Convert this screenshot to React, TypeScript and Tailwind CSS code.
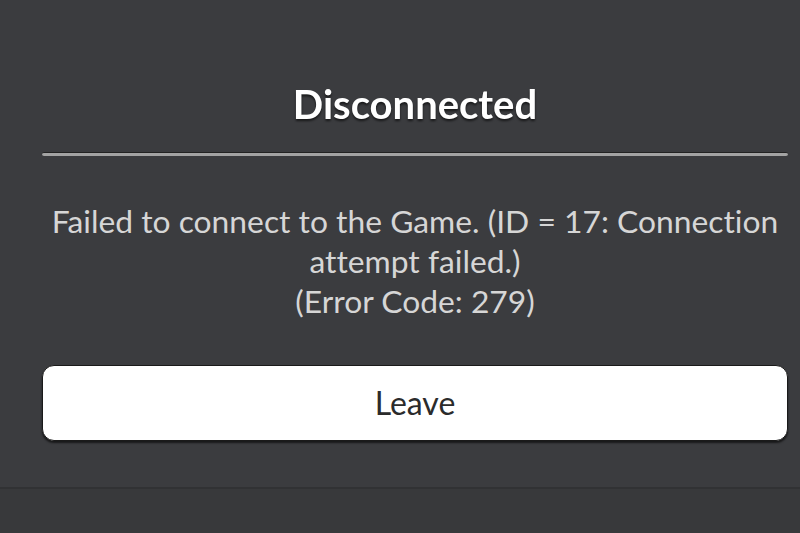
import React from 'react';

export default function App() {
  return (
    <div className="w-[800px] h-[533px] overflow-hidden bg-[#3b3c3f] flex flex-col font-['Lato','Open_Sans',sans-serif] [font-variant-ligatures:none]">
      {/* Dialog body */}
      <div className="flex-1 flex flex-col pl-[42px] pr-[12px] pt-[80px]">
        <h1 className="text-center text-white font-bold text-[40px] leading-[48px] drop-shadow-[0_2px_1px_rgba(0,0,0,0.6)]">
          Disconnected
        </h1>
        <div className="mt-[24px] h-[4px] rounded-full bg-[#a3a3a3] border-t border-[#222]" />
        <p className="mt-[45px] text-center text-[#d6d6d6] text-[31.8px] leading-[40px]">
          Failed to connect to the Game. (ID = 17: Connection attempt failed.)
          <br />
          (Error Code: 279)
        </p>
        <button className="mt-[44px] h-[76px] w-full rounded-[12px] bg-white border border-[#1a1a1a] shadow-[0_2px_2px_rgba(0,0,0,0.6)] text-[#2b2b2b] text-[32px]">
          Leave
        </button>
      </div>
      {/* Bottom bar */}
      <div className="h-[46px] bg-[#38393b] border-t-2 border-[#313234]" />
    </div>
  );
}
